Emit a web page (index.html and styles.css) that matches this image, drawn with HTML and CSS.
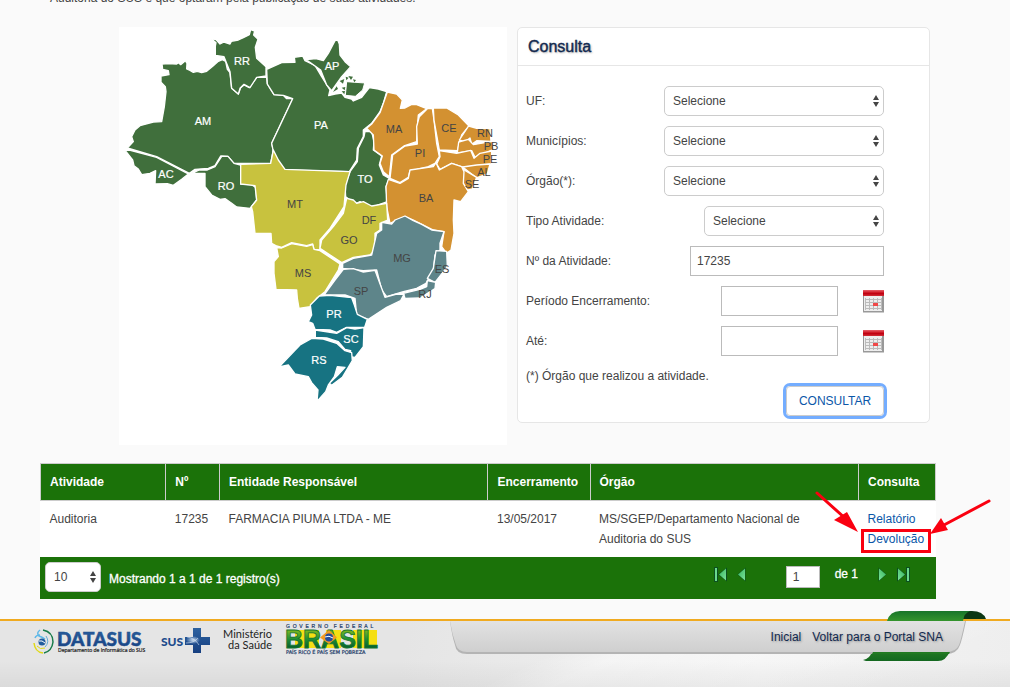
FILE: index.html
```html
<!DOCTYPE html>
<html lang="pt-BR">
<head>
<meta charset="utf-8">
<title>Consulta de Auditorias</title>
<link rel="stylesheet" href="styles.css">
</head>
<body>
<svg class="defs" aria-hidden="true">
  <defs>
    <symbol id="updown" viewBox="0 0 6 12"><path d="M3 0 6 5H0zM0 7h6L3 12z" fill="#444"/></symbol>
    <linearGradient id="red" x2="0" y2="1"><stop offset="0" stop-color="#e8606a"/><stop offset=".4" stop-color="#d01c28"/><stop offset=".6" stop-color="#c00010"/><stop offset="1" stop-color="#d03038"/></linearGradient>
    <symbol id="calendar" viewBox="0 0 21 23">
      <path d="M0 6h21v16H0z" fill="#999"/><path d="M1 6h18v15H1z" fill="#eee"/>
      <path d="M0 0h21v6H0z" fill="url(#red)"/>
      <path d="M2 9.500h17M2 12.500h17M2 15.500h17M2 18.500h17M6.500 8v12M10.500 8v12M14.500 8v12M18.500 8v12M2.500 8v12" stroke="#bbb" fill="none"/>
      <path d="M10 13h5v3h-5z" fill="#f04848"/><path d="M0 22.500h21" stroke="#ccc"/>
    </symbol>
    <linearGradient id="mint" x2="1" y2="1"><stop offset="0" stop-color="#35b45a"/><stop offset="1" stop-color="#7be39c"/></linearGradient>
    <symbol id="prev" viewBox="0 0 9 15"><path d="M8.500.5v14L.5 7.500z" fill="#0c5020"/><path d="M8 1.500v12L1 7.500z" fill="url(#mint)"/></symbol>
    <symbol id="first" viewBox="0 0 13 15"><path d="M13 .5v14L4 7.500z" fill="#0c5020"/><path d="M12 1.500v12L5 7.500z" fill="url(#mint)"/><path d="M0 0h4v15H0z" fill="#0c5020"/><path d="M1 1h2v13H1z" fill="#6bd98e"/></symbol>
  </defs>
</svg>

<main class="page">
  <p class="intro">Auditoria do SUS e que optaram pela publicação de suas atividades.</p>

  <div class="top">
    <figure class="map">
      <svg viewBox="119 27 388 418" role="img" aria-label="Mapa do Brasil">
        <g stroke="#fff" stroke-width="4" stroke-linejoin="round">
          <g class="norte" transform="translate(110 20) scale(.33333)">
            <path d="M156 132 175 131 200 132 206 128 212 134 226 122 231 130 230 147 240 151 250 157 262 154 275 158 290 154 310 137 325 124 337 119 347 124 352 148 360 158 365 205 385 222 392 203 402 195 418 203 440 172 470 172 472 192 492 224 520 226 530 236 548 236 485 370 490 390 482 430 372 430 354 409 332 408 315 437 295 445 255 448 238 460 140 410 52 384 70 365 65 350 75 330 90 317 130 306 155 305 163 260 168 215 166 200 153 187 153 168 177 164 175 152 158 148Z"/>
            <path d="M304 56 318 59 330 72 342 66 360 72 364 64 385 60 400 53 418 44 422 29 434 33 431 45 444 58 436 82 440 115 468 140 468 168 440 172 420 203 402 193 390 205 385 222 365 205 360 155 342 110 316 106 316 78 318 68Z"/>
            <path d="M46 392 58 390 140 412 235 462 215 478 190 496 172 491 135 492 137 452 120 460 95 464 85 447 72 437 68 420Z"/>
            <path d="M245 460 268 450 292 450 315 440 335 409 354 409 372 430 392 435 392 492 425 494 437 502 440 540 420 565 380 561 365 550 345 536 330 538 305 525 285 500 285 460Z"/>
          </g>
          <g transform="translate(300 20) scale(.33333)">
            <g class="norte">
              <path d="M-100 148-55 128-15 127-17 112 8 108 15 122 45 136 65 170 90 210 86 227 105 222 125 219 135 232 155 237 160 243 185 232 208 203 235 207 260 215 250 250 240 275 215 310 190 330 190 350 172 385 170 420 148 455-45 450-65 430-80 395-85 370-22 236-50 226-78 224-98 192Z"/>
              <path d="M18 119 48 116 70 122 85 100 105 62 113 60 118 72 120 105 135 125 152 140 125 170 95 212 80 195 62 150Z"/>
              <path d="M195 335 215 335 222 365 220 390 245 408 238 435 250 465 268 475 258 500 262 545 235 555 215 562 197 557 180 545 165 552 150 540 137 530 135 495 150 455 172 425 175 385 192 350Z"/>
              <path stroke-width="3" d="M140 185 194 189 188 210 166 229 136 226Z"/>
              <path stroke="none" d="M119 183 133 177 129 191ZM145 168 159 170 153 180ZM159 178 168 180 163 187ZM99 216 110 199 114 207ZM125 203 136 201 134 211ZM125 214 135 213 133 223ZM137 170 146 173 139 181Z"/>
            </g>
            <g class="nordeste">
              <path d="M262 216 290 222 307 240 301 265 315 264 335 253 350 254 380 266 355 285 352 320 350 365 312 378 275 405 268 470 250 455 240 430 247 408 222 390 220 345 200 325 215 312 240 278Z"/>
              <path d="M382 266 397 266 402 300 410 370 418 410 405 430 385 440 350 448 330 452 325 472 300 488 270 475 278 405 315 378 352 372 350 320 358 290Z"/>
              <path d="M400 264 440 264 475 285 507 318 485 345 472 392 418 390 410 345 402 300Z"/>
              <path d="M506 318 530 325 570 326 573 364 530 362 515 373 510 354 495 366 478 360Z"/>
              <path d="M476 366 505 358 520 374 577 364 582 387 560 397 525 412 515 392 472 399Z"/>
              <path d="M418 392 470 400 512 391 522 415 540 400 575 393 574 432 530 437 490 442 455 430 420 448 410 432 420 410Z"/>
              <path d="M488 441 530 435 570 432 562 462 530 474Z"/>
              <path d="M490 448 530 472 517 507 495 512 488 480Z"/>
              <path d="M265 478 300 490 325 475 330 450 400 440 408 428 418 450 455 430 485 440 492 455 490 490 505 515 482 545 462 540 460 600 462 640 453 690 440 700 425 680 432 635 400 630 340 600 315 590 270 610 260 560 258 500Z"/>
            </g>
          </g>
          <g transform="translate(220 200) scale(.33333)">
            <g class="centro">
              <path d="M62-107 152-110 160-150 175-120 195-92 390-85 378-45 372 20 330 85 300 120 300 150 282 148 278 132 260 137 215 128 185 142 170 138 155 130 153 100 105 100 98 35 94 20 110 0 105-43 62-48Z"/>
              <path d="M380-5 400 0 410 10 430 5 455 18 500 10 503 60 480 70 480 90 465 100 465 150 450 165 400 172 365 188 300 145 305 120 340 80 370 40Z"/>
              <path d="M170 143 185 144 215 131 260 139 278 134 282 148 300 152 360 192 355 210 315 275 290 295 270 320 237 325 232 295 230 270 168 268 162 220 162 185 175 170Z"/>
            </g>
            <g class="sudeste">
              <path d="M485 67 515 72 525 60 555 48 580 62 605 73 635 90 672 95 660 130 660 150 645 165 640 210 618 250 590 265 550 275 500 290 485 270 470 210 430 212 368 205 368 190 400 175 455 165 470 100 485 90Z"/>
              <path d="M648 152 680 154 682 200 645 247 622 235 640 205Z"/>
              <path d="M622 242 647 247 645 266 600 294 555 295 550 280 600 268 620 260Z"/>
              <path d="M370 208 400 206 430 216 465 211 485 265 495 292 530 282 552 283 542 302 500 322 445 358 410 345 405 295 375 285 312 285 345 240Z"/>
            </g>
            <g class="sul">
              <path d="M298 288 330 286 395 293 403 315 412 343 442 358 434 382 380 382 350 397 330 390 285 388 278 370 265 365 275 345 271 315Z"/>
              <path d="M286 390 350 400 380 383 405 387 432 383 430 440 405 472 388 470 392 452 375 448 355 425 320 414 286 412Z"/>
              <path d="M177 501 240 435 275 415 310 417 350 430 375 452 395 458 397 482 367 532 335 556 329 549 353 526 375 502 352 500 343 530 325 555 317 575 291 604 294 570 275 548 265 530 225 522 205 495Z"/>
            </g>
          </g>
        </g>
        <g class="uf light">
          <text x="242" y="65">RR</text><text x="203" y="125">AM</text><text x="166" y="178">AC</text><text x="226" y="190">RO</text>
          <text x="332" y="70">AP</text><text x="321" y="129">PA</text><text x="365" y="183">TO</text>
          <text x="334" y="318">PR</text><text x="351" y="343">SC</text><text x="319" y="364">RS</text>
        </g>
        <g class="uf dark">
          <text x="394" y="133">MA</text><text x="420" y="157">PI</text><text x="449" y="132">CE</text><text x="485" y="137">RN</text><text x="491" y="150">PB</text><text x="490" y="163">PE</text><text x="484" y="176">AL</text><text x="472" y="188">SE</text><text x="426" y="202">BA</text>
          <text x="295" y="208">MT</text><text x="369" y="224">DF</text><text x="349" y="244">GO</text><text x="303" y="277">MS</text><text x="402" y="262">MG</text><text x="442" y="273">ES</text><text x="361" y="295">SP</text><text x="425" y="298">RJ</text>
        </g>
      </svg>
    </figure>

    <form class="panel">
      <h2>Consulta</h2>
      <div class="fields">
        <div class="row"><label for="uf">UF:</label><span class="select wide"><select id="uf"><option>Selecione</option></select><svg><use href="#updown"/></svg></span></div>
        <div class="row"><label for="mun">Municípios:</label><span class="select wide"><select id="mun"><option>Selecione</option></select><svg><use href="#updown"/></svg></span></div>
        <div class="row"><label for="org">Órgão(*):</label><span class="select wide"><select id="org"><option>Selecione</option></select><svg><use href="#updown"/></svg></span></div>
        <div class="row"><label for="tipo">Tipo Atividade:</label><span class="select mid"><select id="tipo"><option>Selecione</option></select><svg><use href="#updown"/></svg></span></div>
        <div class="row"><label for="num">Nº da Atividade:</label><input class="number" id="num" type="text" value="17235"></div>
        <div class="row"><label for="ini">Período Encerramento:</label><span class="date"><input id="ini" type="text"><button type="button" class="icon" aria-label="Abrir calendário"><svg width="21" height="23"><use href="#calendar"/></svg></button></span></div>
        <div class="row"><label for="fim">Até:</label><span class="date"><input id="fim" type="text"><button type="button" class="icon" aria-label="Abrir calendário"><svg width="21" height="23"><use href="#calendar"/></svg></button></span></div>
        <p class="note">(*) Órgão que realizou a atividade.</p>
        <button type="button" class="submit">CONSULTAR</button>
      </div>
    </form>
  </div>

  <section class="results">
    <table>
      <colgroup><col class="c1"><col class="c2"><col class="c3"><col class="c4"><col class="c5"><col class="c6"></colgroup>
      <thead><tr><th>Atividade</th><th>Nº</th><th>Entidade Responsável</th><th>Encerramento</th><th>Órgão</th><th>Consulta</th></tr></thead>
      <tbody><tr>
        <td>Auditoria</td><td>17235</td><td>FARMACIA PIUMA LTDA - ME</td><td>13/05/2017</td>
        <td><div class="agency">MS/SGEP/Departamento Nacional de Auditoria do SUS</div></td>
        <td><a href="#">Relatório</a><br><span class="marked"><a href="#">Devolução</a>
          <svg class="marks" viewBox="814 488 178 68" aria-hidden="true"><g fill="none" stroke="#fa0010" stroke-width="3"><path d="M862.500 529.500h67v21h-67z"/><path d="M817 492 846 518M989 500 944 524" stroke-linecap="round"/></g><path d="M858 531 834 519 847 511ZM930 533 941 517 948 529Z" fill="#fa0010"/></svg></span></td>
      </tr></tbody>
    </table>
    <div class="pager">
      <span class="select size"><select aria-label="Registros por página"><option>10</option></select><svg><use href="#updown"/></svg></span>
      <span class="count">Mostrando 1 a 1 de 1 registro(s)</span>
      <div class="nav">
        <button type="button" aria-label="Primeira"><svg width="13" height="15"><use href="#first"/></svg></button>
        <button type="button" aria-label="Anterior"><svg width="9" height="15"><use href="#prev"/></svg></button>
        <input type="text" value="1" aria-label="Página">
        <span class="of">de 1</span>
        <button type="button" class="flip" aria-label="Próxima"><svg width="9" height="15"><use href="#prev"/></svg></button>
        <button type="button" class="flip" aria-label="Última"><svg width="13" height="15"><use href="#first"/></svg></button>
      </div>
    </div>
  </section>
</main>

<footer class="footer">
  <svg class="logos" width="350" height="40" viewBox="30 621 350 40" role="img" aria-label="DATASUS, SUS, Ministério da Saúde, Governo Federal">
    <defs>
      <linearGradient id="blue" x2="0" y2="1"><stop offset="0" stop-color="#2d62a0"/><stop offset="1" stop-color="#163f80"/></linearGradient>
      <linearGradient id="leaf" x2="0" y2="1"><stop offset=".2" stop-color="#7db51f"/><stop offset=".5" stop-color="#219035"/><stop offset=".8" stop-color="#08602c"/></linearGradient>
      <radialGradient id="shine"><stop offset="0" stop-color="#c8dcf0"/><stop offset="1" stop-color="#c8dcf0" stop-opacity="0"/></radialGradient>
    </defs>
    <g fill="none">
      <path d="M40 630q-4 3-1 6 3 1 6 3M35 638q1-3 5-3" stroke="#5eb8e8" stroke-width="1.500"/>
      <path d="M43 630q10 2 10 12-1 9-9 11" stroke="#187c4a" stroke-width="1.500"/>
      <path d="M46 636q4 6-1 11" stroke="#65aad4"/>
      <path d="M34 643q1 9 9 10" stroke="#dfd916" stroke-width="1.500"/><path d="M37 646q3 4 8 2" stroke="#dfd916"/>
    </g>
    <circle cx="42" cy="642" r="3.500" fill="#235d9d"/><path d="M39 641q3-1 6 2" stroke="#fff" fill="none"/>
    <text class="datasus" x="57" y="646" fill="url(#blue)">DATASUS</text>
    <text class="dept" x="58" y="652">Departamento de Informática do SUS</text>
    <text class="sus" x="161" y="646">SUS</text>
    <path d="M193 628h8v9h9v8h-9v8h-8v-8h-8v-8h8z" fill="url(#blue)"/><ellipse cx="193" cy="640" rx="7" ry="4" fill="url(#shine)"/><path d="M187 637q8 1 12 8M186 643q8 0 12-5" stroke="#dbe8f5" stroke-width=".6" fill="none"/>
    <g class="ministry"><text x="272" y="638">Ministério</text><text x="272" y="649">da Saúde</text></g>
    <g class="tiny"><text x="286" y="628">G&#160; O&#160; V&#160; E&#160; R&#160; N&#160; O&#160; &#160; F&#160; E&#160; D&#160; E&#160; R&#160; A&#160; L</text><text class="slogan" x="286" y="654">PAÍS RICO É PAÍS SEM POBREZA</text></g>
    <path d="M326 630h15v18h-15zM353 630h24v18h-24zM295 630h24v18h-24z" fill="#f5df13"/>
    <text class="brasil" x="285" y="648" fill="url(#leaf)">BRASIL</text>
    <path d="M320 637.500 329 630 337 637.500 329 644Z" fill="#f39a24"/><circle cx="329" cy="637.500" r="4" fill="#254b99"/><path d="M325 637q4-2 8 1" stroke="#fff" fill="none"/>
  </svg>
  <svg class="ribbon" width="540" height="50" viewBox="447 611 540 50" aria-hidden="true">
    <defs>
      <linearGradient id="g1" x2="0" y2="1"><stop offset="0" stop-color="#18752a"/><stop offset="1" stop-color="#34942c"/></linearGradient>
      <linearGradient id="g2" x2="0" y2="1"><stop offset="0" stop-color="#227a22"/><stop offset="1" stop-color="#146820"/></linearGradient>
      <linearGradient id="tab" x2="0" y2="1"><stop offset="0" stop-color="#e2e2e2"/><stop offset="1" stop-color="#cfcfcf"/></linearGradient>
    </defs>
    <path d="M960 619q2-8 8-8h4q11 0 14 8z" fill="#0c3714"/>
    <path d="M850 621Q853 611 862 611" fill="none"/>
    <path d="M887 621Q890 611 900 611H970Q964 613 963 621Z" fill="url(#g1)"/>
    <path d="M863 660q7-1 9-9h78q-4 10-12 10H866Z" fill="url(#g2)"/>
    <path d="M450 621H966Q962 640 960 645 957 654 946 654H467Q456 654 455 645 452 636 450 621Z" fill="#b4b4b4"/>
    <path d="M873 652h77l-1 2h-77z" fill="#227a22"/>
    <path d="M450 621H965Q961 640 959 645 956 652 946 652H467Q458 652 456 645 452 634 450 621Z" fill="url(#tab)"/>
  </svg>
  <nav><a href="#">Inicial</a><a href="#">Voltar para o Portal SNA</a></nav>
</footer>
</body>
</html>
```
FILE: styles.css
```css
* { box-sizing: border-box; }
body {
  margin: 0;
  min-height: 100vh;
  display: flex;
  flex-direction: column;
  overflow: hidden;
  background: #fafafa;
  color: #444;
  font: 12px/20px "Liberation Sans", Arial, sans-serif;
}
input, select, button { font: inherit; color: inherit; }
a { color: #0b57a8; text-decoration: none; }
.defs { position: absolute; width: 0; height: 0; }

.page { padding: 0 74px 0 40px; }
.intro { margin: -12px 0 19px 10px; }
.top { display: grid; grid-template-columns: 388fr 413fr; gap: 10px; align-items: start; margin: 0 6px 0 79px; }

.map { margin: 0; background: #fff; }
.map svg { display: block; width: 100%; }
.norte { fill: #406f3c; }
.nordeste { fill: #d39131; }
.centro { fill: #c8c23e; }
.sudeste { fill: #5e858a; }
.sul { fill: #177382; }
.uf { font-size: 11px; text-anchor: middle; }
.light { fill: #fff; stroke: #fff; stroke-width: .2; }
.dark { fill: #444; }

.panel { background: #fff; border: 1px solid #e6e6e6; border-radius: 5px; }
.panel h2 {
  margin: 0;
  padding: 8px 10px;
  border-bottom: 1px solid #e6e6e6;
  color: #12294f;
  font-size: 16px;
  font-weight: normal;
  line-height: 21px;
  -webkit-text-stroke: 0.4px #12294f;
  text-shadow: 1px 1px 2px #aaa;
}
.fields { display: flex; flex-direction: column; gap: 10px; padding: 20px 45px 6px 8px; }
.row { display: flex; justify-content: space-between; align-items: center; height: 30px; }
.select { position: relative; display: block; }
.select select {
  appearance: none;
  width: 100%;
  height: 30px;
  padding: 0 8px 1px;
  border: 1px solid #ccc;
  border-radius: 5px;
  background: #fff;
}
.select svg { position: absolute; right: 5px; top: 9px; width: 6px; height: 12px; pointer-events: none; }
.wide { width: 220px; }
.mid { width: 180px; }
input { height: 30px; padding: 0 6px 1px; border: 1px solid #bbb; background: #fff; }
.number { width: 194px; }
.date { display: flex; align-items: center; justify-content: space-between; width: 163px; }
.date input { width: 117px; }
.icon, .nav button { padding: 0; border: 0; background: none; }
.icon svg, .nav svg { display: block; }
.note { margin: 0 0 -10px; }
.submit {
  align-self: flex-end;
  width: 98px;
  height: 30px;
  padding: 0;
  border: 1px solid #ccc;
  border-radius: 4px;
  outline: 3px solid #74adff;
  background: #fff;
  color: #0b57a8;
}

.results { margin-top: 18px; background: #fff; }
table { width: 100%; border-collapse: collapse; table-layout: fixed; }
.c1 { width: 14%; }
.c2 { width: 6%; }
.c3 { width: 30%; }
.c4 { width: 11.400%; }
.c5 { width: 30%; }
.c6 { width: 8.600%; }
th { height: 37px; padding: 0 9px; border: 1px solid #ccc; background: #1b7209; color: #fff; text-align: left; }
td { padding: 8px 9px; vertical-align: top; }
.agency { max-width: 210px; }
.marked { position: relative; }
.marks { position: absolute; left: -54px; top: -43px; width: 178px; height: 68px; pointer-events: none; }

.pager { display: flex; align-items: center; gap: 8px; height: 42px; padding: 0 26px 2px 5px; background: #1b7209; color: #fff; }
.size { width: 56px; color: #444; }
.count { flex: 1; padding-top: 4px; }
.count, .of { -webkit-text-stroke: 0.3px #fff; }
.nav { display: flex; align-items: center; gap: 10px; }
.nav button, .of { padding-bottom: 6px; }
.nav input { width: 34px; height: 22px; margin: 0 5px 0 30px; color: #444; }
.of { margin-right: 10px; }
.flip { transform: scaleX(-1); }

.footer {
  position: relative;
  flex: 1;
  display: flex;
  justify-content: space-between;
  align-items: flex-start;
  margin-top: 20px;
  min-height: 68px;
  border-top: 2px solid #f0aa20;
  background:
    linear-gradient(0deg, #0000000c, transparent 40%),
    linear-gradient(155deg, transparent 54%, #ffffff66 60%, #ffffff00 90%),
    linear-gradient(100deg, #e5e5e5 40%, #f4f4f4 75%, #eee);
}
.logos { margin-left: 30px; }
.datasus { font: 900 19px Lato, sans-serif; stroke: #20508f; stroke-width: .5; }
.dept { font: 5px "Open Sans", sans-serif; fill: #222; stroke: #222; stroke-width: .2; }
.sus { font: 900 12px Lato, sans-serif; fill: #1d4c8c; }
.ministry { font: 11px Lato, sans-serif; fill: #222; text-anchor: end; }
.tiny { font: 5px "Liberation Sans", sans-serif; fill: #1d3b68; stroke: #1d3b68; stroke-width: .2; }
.slogan { font-family: "DejaVu Sans", sans-serif; }
.brasil { font: bold 25px "Liberation Sans", sans-serif; stroke: #157630; stroke-width: .8; }
.ribbon { position: absolute; right: 23px; top: -10px; }
.footer nav { position: relative; display: flex; gap: 11px; padding: 6px 67px 0 0; }
.footer nav a { color: #12294f; text-shadow: 1px 1px 2px #999; }
```
